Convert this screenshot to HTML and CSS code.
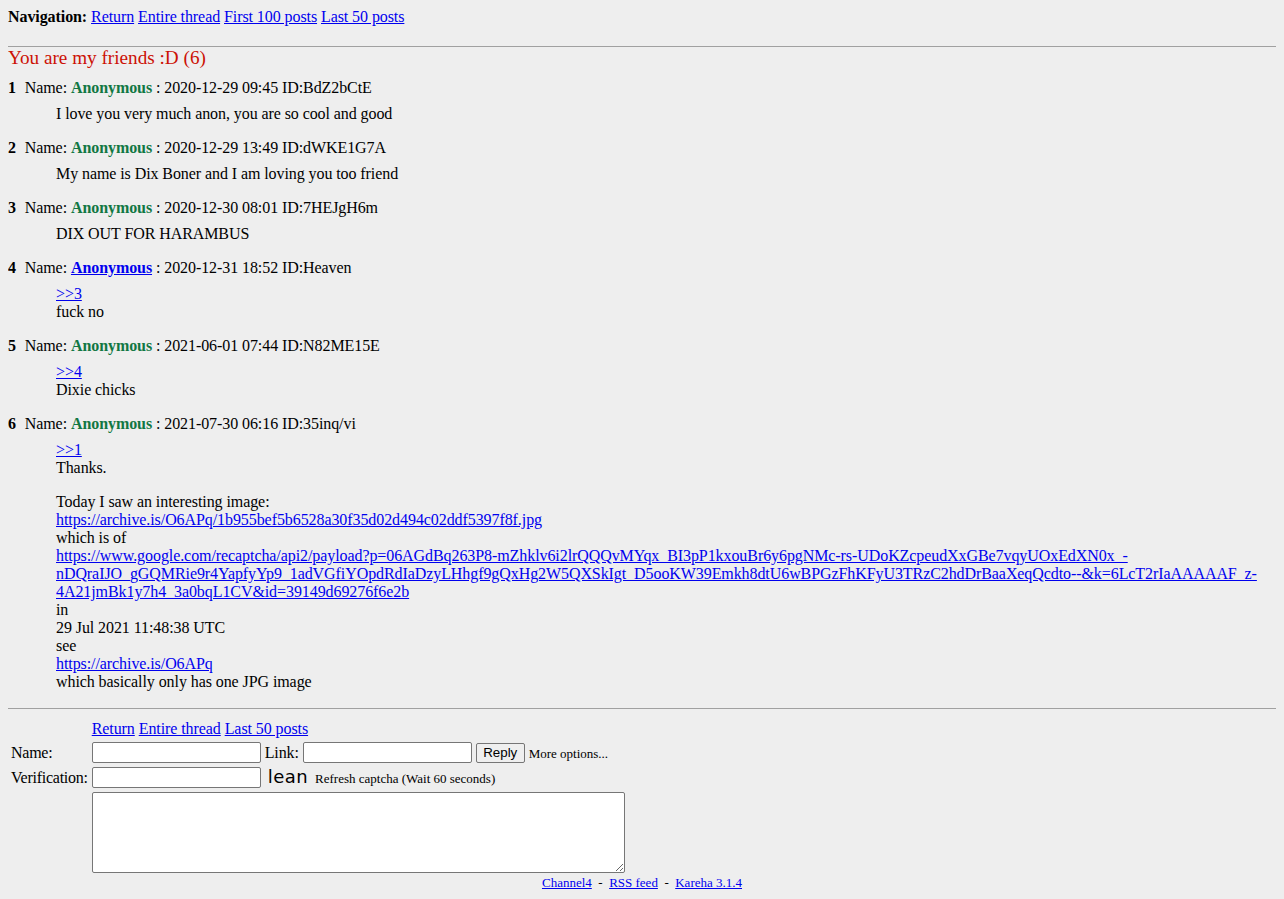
FILE: index.html
```html
<!DOCTYPE html>
<html>
<head>
<meta charset="utf-8">
<title>You are my friends :D</title>
<link rel="stylesheet" href="styles.css">
</head>
<body>
<div class="navbar"><b>Navigation:</b> <a href="#">Return</a> <a href="#">Entire thread</a> <a href="#">First 100 posts</a> <a href="#">Last 50 posts</a></div>
<hr class="rule-top">
<h2 class="thread-title">You are my friends :D (6)</h2>

<div class="reply">
<h3 class="reply-head"><span class="replynum">1</span>&nbsp; Name: <span class="postername">Anonymous</span> : 2020-12-29 09:45 ID:BdZ2bCtE</h3>
<blockquote class="replytext"><p>I love you very much anon, you are so cool and good</p></blockquote>
</div>

<div class="reply">
<h3 class="reply-head"><span class="replynum">2</span>&nbsp; Name: <span class="postername">Anonymous</span> : 2020-12-29 13:49 ID:dWKE1G7A</h3>
<blockquote class="replytext"><p>My name is Dix Boner and I am loving you too friend</p></blockquote>
</div>

<div class="reply">
<h3 class="reply-head"><span class="replynum">3</span>&nbsp; Name: <span class="postername">Anonymous</span> : 2020-12-30 08:01 ID:7HEJgH6m</h3>
<blockquote class="replytext"><p>DIX OUT FOR HARAMBUS</p></blockquote>
</div>

<div class="reply">
<h3 class="reply-head"><span class="replynum">4</span>&nbsp; Name: <a class="postername-link" href="#">Anonymous</a> : 2020-12-31 18:52 ID:Heaven</h3>
<blockquote class="replytext"><p><a href="#">&gt;&gt;3</a><br>fuck no</p></blockquote>
</div>

<div class="reply">
<h3 class="reply-head"><span class="replynum">5</span>&nbsp; Name: <span class="postername">Anonymous</span> : 2021-06-01 07:44 ID:N82ME15E</h3>
<blockquote class="replytext"><p><a href="#">&gt;&gt;4</a><br>Dixie chicks</p></blockquote>
</div>

<div class="reply reply-last">
<h3 class="reply-head"><span class="replynum">6</span>&nbsp; Name: <span class="postername">Anonymous</span> : 2021-07-30 06:16 ID:35inq/vi</h3>
<blockquote class="replytext"><p><a href="#">&gt;&gt;1</a><br>Thanks.</p><p>Today I saw an interesting image:<br><a href="#">https://archive.is/O6APq/1b955bef5b6528a30f35d02d494c02ddf5397f8f.jpg</a><br>which is of<br><a href="#">https://www.google.com/recaptcha/api2/payload?p=06AGdBq263P8-mZhklv6i2lrQQQvMYqx_BI3pP1kxouBr6y6pgNMc-rs-UDoKZcpeudXxGBe7vqyUOxEdXN0x_-nDQraIJO_gGQMRie9r4YapfyYp9_1adVGfiYOpdRdIaDzyLHhgf9gQxHg2W5QXSkIgt_D5ooKW39Emkh8dtU6wBPGzFhKFyU3TRzC2hdDrBaaXeqQcdto--&amp;k=6LcT2rIaAAAAAF_z-4A21jmBk1y7h4_3a0bqL1CV&amp;id=39149d69276f6e2b</a><br>in<br>29 Jul 2021 11:48:38 UTC<br>see<br><a href="#">https://archive.is/O6APq</a><br>which basically only has one JPG image</p></blockquote>
</div>

<hr class="rule-bottom">

<form class="postform">
<table class="postform-table">
<tbody>
<tr><td></td><td><a href="#">Return</a> <a href="#">Entire thread</a> <a href="#">Last 50 posts</a></td></tr>
<tr class="field-row"><td class="label">Name:</td><td><input type="text" class="field"> Link: <input type="text" class="field"> <button type="button" class="btn">Reply</button> <small class="more">More options...</small></td></tr>
<tr class="field-row"><td class="label">Verification:</td><td><input type="text" class="field"> <span class="captcha">lean</span> <small class="more">Refresh captcha (Wait 60 seconds)</small></td></tr>
<tr><td></td><td><textarea class="comment"></textarea></td></tr>
</tbody>
</table>
</form>

<div class="footer"><a href="#">Channel4</a>&nbsp; - &nbsp;<a href="#">RSS feed</a>&nbsp; - &nbsp;<a href="#">Kareha 3.1.4</a></div>
</body>
</html>
```
FILE: styles.css
```css
html { background: #eeeeee; }
body {
  margin: 8px;
  background: #eeeeee;
  color: #000;
  font-family: "Liberation Serif", "Times New Roman", serif;
  font-size: 16px;
  line-height: 18px;
  letter-spacing: -0.08px;
}
a { color: #0000ee; }

.navbar { height: 18px; }

.rule-top {
  margin: 20px 0 0;
  border: 0;
  border-top: 1px solid #a0a0a0;
  height: 0;
}
.thread-title {
  margin: 0 0 10px;
  font-size: 19.2px;
  line-height: 22px;
  font-weight: normal;
  color: #cc1105;
  letter-spacing: 0;
}

.reply { margin-bottom: 16px; }
.reply-last { margin-bottom: 17px; }
.reply-head {
  margin: 0 0 8px;
  font-size: 16px;
  font-weight: normal;
  line-height: 18px;
}
.replynum { font-weight: bold; margin-right: 1px; }
.postername { font-weight: bold; color: #117743; }
.postername-link { font-weight: bold; }
.replytext { margin: 0 0 0 48px; }
.replytext p { margin: 0 0 16px; }
.replytext p:last-child { margin-bottom: 0; }

.rule-bottom {
  margin: 0 0 8px;
  border: 0;
  border-top: 1px solid #a0a0a0;
  height: 0;
}

.postform { margin: 0; }
.postform-table { border-spacing: 2px; }
.postform-table td { padding: 1px; vertical-align: middle; line-height: 18px; }
.field-row td { height: 21px; line-height: 17px; }
.label { white-space: nowrap; letter-spacing: -0.25px; }
.field {
  box-sizing: border-box;
  width: 169px;
  height: 21px;
  margin: 0;
  padding: 1px 2px;
  border: 1px solid #767676;
  border-radius: 2px;
  background: #fff;
  font-family: "Liberation Sans", Arial, sans-serif;
  font-size: 13.33px;
  vertical-align: 1px;
}
.btn {
  box-sizing: border-box;
  width: 49px;
  height: 20px;
  margin: 0;
  padding: 0 6px;
  border: 1px solid #767676;
  border-radius: 2px;
  background: #efefef;
  font-family: "Liberation Sans", Arial, sans-serif;
  font-size: 13.33px;
  letter-spacing: 0;
  color: #000;
  vertical-align: 1px;
}
.more { font-size: 13px; letter-spacing: 0; }
.captcha {
  display: inline-block;
  margin: 0 3px 0 3px;
  font-family: "DejaVu Sans", sans-serif;
  font-weight: normal;
  font-size: 18px;
  letter-spacing: 0.5px;
  line-height: 17px;
}
.comment {
  display: block;
  box-sizing: border-box;
  width: 533px;
  height: 81px;
  border: 1px solid #767676;
  border-radius: 2px;
  background: #fff;
  margin: 0;
}
.footer {
  text-align: center;
  font-size: 13px;
  line-height: 13px;
  letter-spacing: 0;
}
```
